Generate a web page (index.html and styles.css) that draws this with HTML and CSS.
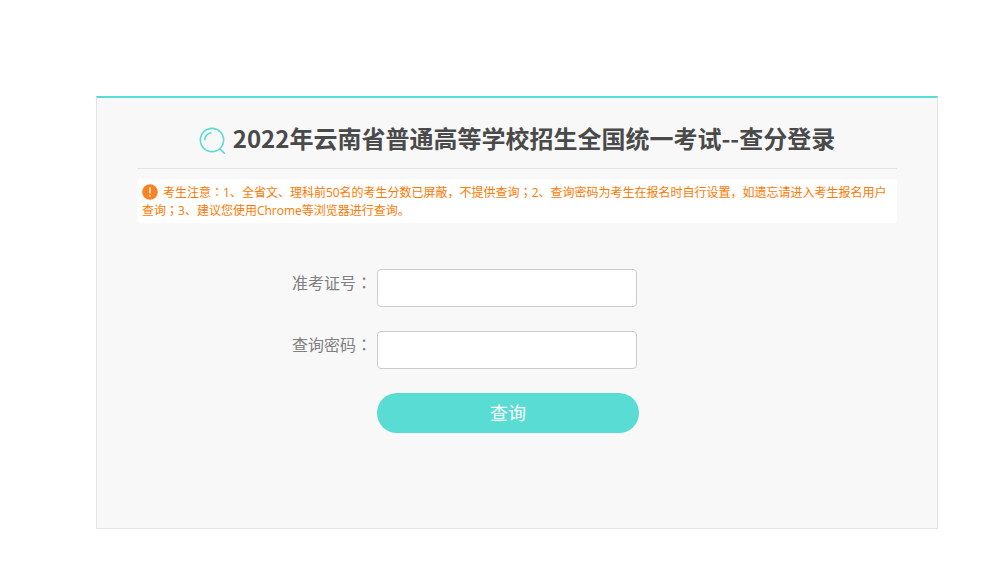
FILE: index.html
```
<!DOCTYPE html>
<html lang="zh-CN">
<head>
    <meta charset="UTF-8">
    <meta name="viewport" content="width=device-width, initial-scale=1.0">
    <title>查分登录</title>
    <link rel="stylesheet" href="styles.css">
</head>
<body>

    <div class="login-panel">
        <h1 class="login-title">
            <svg class="search-icon" viewBox="0 0 28 28" fill="none" stroke="#58dcd3" stroke-width="1.6" aria-hidden="true">
                <circle cx="13" cy="14" r="11.6"/>
                <path d="M5.7 14.2a7.3 7.3 0 0 1 6.8-7.4M20.8 22.8l5 5"/>
            </svg>
            <span>2022年云南省普通高等学校招生全国统一考试--查分登录</span>
        </h1>

        <p class="notice"><svg class="notice-icon" viewBox="0 0 16 16" aria-hidden="true"><circle cx="8" cy="8" r="7.8" fill="#f98322"/><path d="M7.3 3.2h1.4v6.4H7.3z" fill="#fff"/><circle cx="8" cy="11.8" r="0.9" fill="#fff"/></svg>考生注意<span class="mark" lang="ja">：</span>1、全省文、理科前50名的考生分数已屏蔽，不提供查询<span class="mark" lang="ja">；</span>2、查询密码为考生在报名时自行设置，如遗忘请进入考生报名用户查询<span class="mark" lang="ja">；</span>3、建议您使用Chrome等浏览器进行查询。</p>

        <form class="login-form">
            <div class="form-row">
                <label for="ticket">准考证号<span class="mark" lang="ja">：</span></label>
                <input type="text" id="ticket" name="ticket">
            </div>
            <div class="form-row">
                <label for="password">查询密码<span class="mark" lang="ja">：</span></label>
                <input type="password" id="password" name="password">
            </div>
            <button class="query-button" type="submit">查询</button>
        </form>
    </div>

</body>
</html>
```
FILE: styles.css
```
* {
    box-sizing: border-box;
}

/* General body styling */
body {
    margin: 0;
    padding: 96px 66px 59px 96px;
    background-color: #fff;
    font-family: 'Open Sans', 'Noto Sans CJK SC', sans-serif;
}

/* Main panel */
.login-panel {
    padding: 0 40px 95px;
    background-color: #f8f8f8;
    border: 1px solid #e3e3e3;
    border-top: 2px solid #58dcd3;
}

/* Heading */
.login-title {
    display: flex;
    justify-content: center;
    align-items: flex-end;
    gap: 6px;
    margin: 0 0 10px;
    padding: 24px 0 14px;
    border-bottom: 1px solid #e3e3e3;
    color: #4a4a4a;
    font-family: 'Noto Sans CJK SC', sans-serif;
    font-size: 24px;
    font-weight: bold;
    line-height: 32px;
}

.search-icon {
    width: 28px;
    height: 28px;
}

/* Notice box */
.notice {
    margin: 0 0 46px;
    padding: 5px 5px 3px;
    border-radius: 4px;
    background-color: #fff;
    color: #ff7800;
    font-size: 12px;
    line-height: 18px;
}

.notice-icon {
    width: 16px;
    height: 16px;
    margin-right: 5px;
    vertical-align: top;
}

/* Centered full-width punctuation */
.mark {
    font-family: 'Noto Sans CJK JP', sans-serif;
    line-height: 1;
}

/* Form */
.login-form {
    display: flex;
    flex-direction: column;
    gap: 24px;
    width: 484px;
    max-width: 100%;
    margin: 0 auto;
    padding-left: 17px;
}

.form-row {
    display: flex;
}

.form-row label {
    width: 85px;
    color: #808080;
    font-size: 16px;
    line-height: 28px;
}

.form-row input {
    width: 260px;
    height: 38px;
    padding: 0 10px;
    border: 1px solid #ccc;
    border-radius: 4px;
    background-color: #fff;
    font-size: 16px;
}

/* Submit button */
.query-button {
    width: 262px;
    height: 40px;
    margin-left: 85px;
    padding: 0 0 2px;
    border: none;
    border-radius: 20px;
    background-color: #58dcd3;
    color: #fff;
    font-family: inherit;
    font-size: 18px;
    cursor: pointer;
}
```
